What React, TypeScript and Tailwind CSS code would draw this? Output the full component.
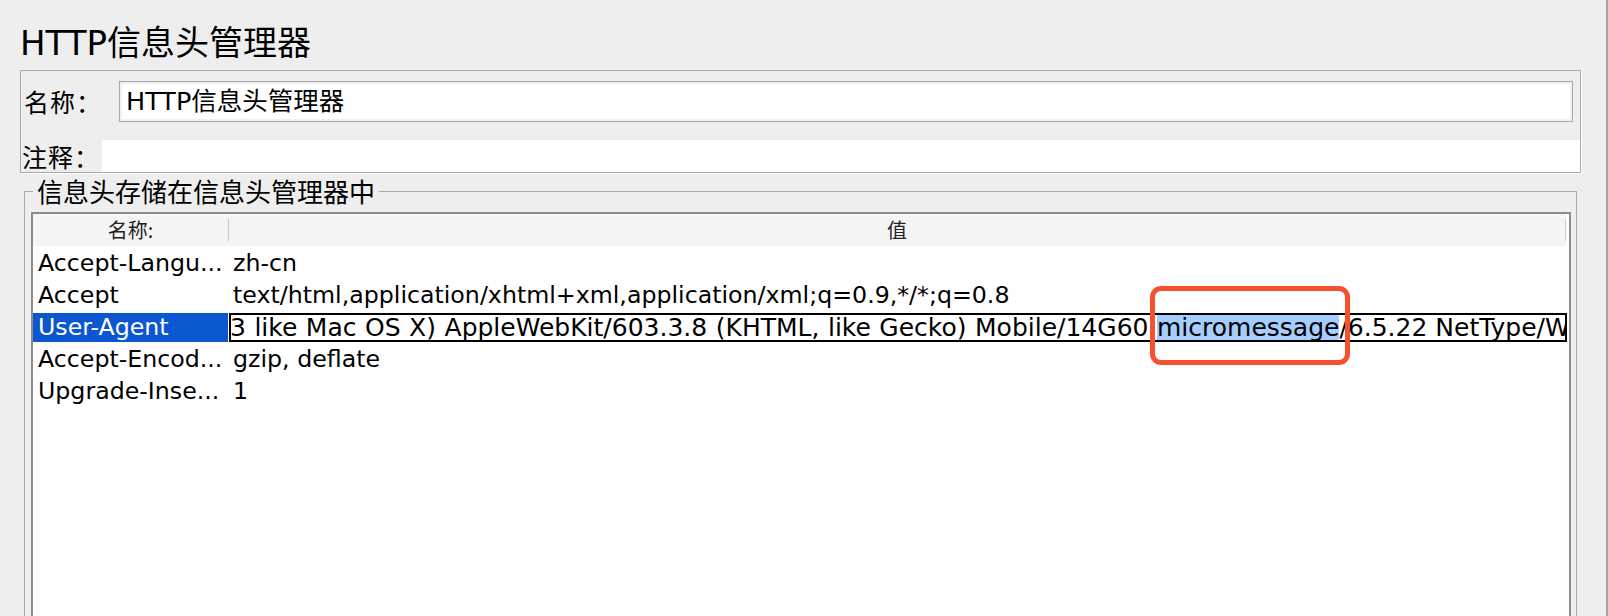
import React from "react";

const ROWS: { name: string; value?: string; selected?: boolean }[] = [
  { name: "Accept-Langu...", value: "zh-cn" },
  { name: "Accept", value: "text/html,application/xhtml+xml,application/xml;q=0.9,*/*;q=0.8" },
  { name: "User-Agent", selected: true },
  { name: "Accept-Encod...", value: "gzip, deflate" },
  { name: "Upgrade-Inse...", value: "1" },
];

export default function App() {
  return (
    <div className="relative flex h-[616px] w-[1608px] overflow-hidden bg-[#eeeeee] font-['DejaVu_Sans','Noto_Sans_CJK_SC',sans-serif] text-black">
      <div className="flex h-[616px] w-[1606px] shrink-0 flex-col overflow-hidden">
        <div className="h-[70px] shrink-0 whitespace-nowrap pl-[20px] pt-[23px] text-[34px] leading-[40px]">HTTP信息头管理器</div>

        <div className="ml-[20px] flex h-[103px] w-[1561px] shrink-0 flex-col border border-[#a8a8a8] pt-[10px] shadow-[1px_1px_0_#ffffff]">
          <div className="flex h-[41px] shrink-0 items-center">
            <div className="w-[98px] whitespace-nowrap pl-[3px] font-['Noto_Sans_CJK_SC',sans-serif] text-[25px] leading-[41px] tracking-[1px]">名称：</div>
            <div className="flex h-[41px] w-[1454px] items-center whitespace-nowrap border border-[#a9a9a9] bg-white pl-[6px] text-[25.5px] shadow-[inset_0_0_0_2px_#f0f0f0]">
              HTTP信息头管理器
            </div>
          </div>
          <div className="mt-[18px] flex h-[32px] shrink-0">
            <div className="w-[81px] whitespace-nowrap pl-[1px] font-['Noto_Sans_CJK_SC',sans-serif] text-[25px] leading-[32px] tracking-[1px]">注释：</div>
            <div className="flex-1 bg-white" />
          </div>
        </div>

        <fieldset className="ml-[24px] mt-[4px] h-[480px] w-[1553px] shrink-0 border border-[#a9a9a9]">
          <legend className="ml-[8px] px-[4px] font-['Noto_Sans_CJK_SC',sans-serif] text-[26px] leading-[28px]">
            信息头存储在信息头管理器中
          </legend>
          <div className="ml-[6px] mt-[7px] flex h-[440px] w-[1540px] flex-col border-2 border-[#8c8c8c] bg-white">
            <div className="flex h-[32px] shrink-0 bg-[#f4f4f4] font-['Noto_Sans_CJK_SC',sans-serif] text-[20px] leading-[32px] text-[#222222]">
              <div className="w-[195px] text-center">名称:</div>
              <div className="h-[22px] w-px self-center bg-[#c8c8c8]" />
              <div className="w-[1336px] text-center">值</div>
              <div className="h-[22px] w-px self-center bg-[#c8c8c8]" />
              <div className="flex-1 bg-white" />
            </div>
            {ROWS.map((r) => (
              <div key={r.name} className="flex h-[32px] shrink-0 pt-[3px] text-[23.7px] leading-[29px]">
                <div
                  className={
                    r.selected
                      ? "h-[29px] w-[195px] overflow-hidden whitespace-nowrap bg-[#0b57d0] pl-[5px] text-white"
                      : "h-[29px] w-[195px] overflow-hidden whitespace-nowrap pl-[5px]"
                  }
                >
                  {r.name}
                </div>
                <div className="w-px" />
                {r.selected ? (
                  <div className="flex h-[29px] w-[1338px] overflow-hidden whitespace-nowrap border-2 border-black text-[25px] leading-[25px]">
                    <div className="flex w-[926px] shrink-0 justify-end overflow-hidden">
                      <span className="whitespace-pre [word-spacing:0.6px]">Mozilla/5.0 (iPhone; CPU iPhone OS 10_3_3 like Mac OS X) AppleWebKit/603.3.8 (KHTML, like Gecko) Mobile/14G60 </span>
                    </div>
                    <span className="shrink-0 bg-[#a5cdff]">micromessage</span>
                    <span className="shrink-0 whitespace-pre">/6.5.22 NetType/WIFI Language/zh_CN</span>
                  </div>
                ) : (
                  <div className="h-[29px] flex-1 whitespace-nowrap pl-[4px]">{r.value}</div>
                )}
              </div>
            ))}
          </div>
        </fieldset>
      </div>
      <div className="w-[2px] shrink-0 bg-[#a3a3a3]" />

      <div className="pointer-events-none absolute left-[1150px] top-[286px] h-[79px] w-[200px] rounded-[11px] border-[5px] border-[#f4512c]" />
    </div>
  );
}
